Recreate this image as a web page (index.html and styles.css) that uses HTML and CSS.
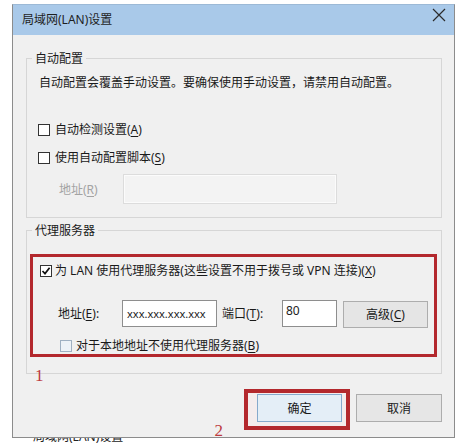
FILE: index.html
```html
<!DOCTYPE html>
<html lang="zh-CN">
<head>
<meta charset="utf-8">
<title>局域网(LAN)设置</title>
<link rel="stylesheet" href="styles.css">
</head>
<body>
<div class="dialog">
  <div class="titlebar">
    <span class="title">局域网(LAN)设置</span>
    <svg class="close" width="14" height="14" viewBox="0 0 14 14"><path d="M1 1L13 13M13 1L1 13" stroke="#2b2b2b" stroke-width="1.2" fill="none"/></svg>
  </div>
  <div class="content">
    <div class="group group-auto">
      <div class="legend">自动配置</div>
      <div class="desc">自动配置会覆盖手动设置。要确保使用手动设置，请禁用自动配置。</div>
      <div class="check-row row-a"><span class="box"></span><span>自动检测设置(<u>A</u>)</span></div>
      <div class="check-row row-s"><span class="box"></span><span>使用自动配置脚本(<u>S</u>)</span></div>
      <div class="script-row"><span class="label-r">地址(<u>R</u>)</span><span class="input-disabled"></span></div>
    </div>
    <div class="group group-proxy">
      <div class="legend">代理服务器</div>
      <div class="highlight">
        <div class="check-row row-x"><span class="box checked"><svg width="10" height="10" viewBox="0 0 10 10"><path d="M1.5 5L4 7.6L8.6 1.8" stroke="#111" stroke-width="1.7" fill="none"/></svg></span><span>为 LAN 使用代理服务器(这些设置不用于拨号或 VPN 连接)(<u>X</u>)</span></div>
        <div class="addr-row">
          <span class="label-e">地址(<u>E</u>):</span>
          <span class="input-addr">xxx.xxx.xxx.xxx</span>
          <span class="label-t">端口(<u>T</u>):</span>
          <span class="input-port">80</span>
          <button class="btn btn-adv">高级(<u>C</u>)</button>
        </div>
        <div class="check-row row-b"><span class="box soft"></span><span>对于本地地址不使用代理服务器(<u>B</u>)</span></div>
      </div>
      <span class="mark mark-1">1</span>
    </div>
    <div class="buttons">
      <span class="mark mark-2">2</span>
      <div class="focus-ring"><button class="btn btn-ok">确定</button></div>
      <button class="btn btn-cancel">取消</button>
    </div>
  </div>
</div>
<div class="under"><div class="under-text">局域网(LAN)设置</div></div>
</body>
</html>
```

FILE: styles.css
```css
html, body {
  margin: 0;
  padding: 0;
}
body {
  width: 469px;
  height: 443px;
  overflow: hidden;
  background: #ffffff;
  font-family: "Noto Sans", "Noto Sans CJK SC", sans-serif;
  font-size: 12px;
  color: #1a1a1a;
}
u {
  text-decoration: underline;
  text-underline-offset: 2px;
}
.dialog {
  margin: 4px 0 0 12px;
  width: 441px;
  height: 432px;
  border: 1px solid #8c8c8c;
  border-top-color: #9cb9d6;
  background: #f0f0f0;
  overflow: hidden;
}
.titlebar {
  height: 30px;
  background: #a9c9e9;
  display: flex;
  justify-content: space-between;
  align-items: center;
  padding: 0 8px 0 9px;
}
.title {
  font-size: 12px;
  line-height: 18px;
  color: #1f1f1f;
}
.close {
  align-self: flex-start;
  margin-top: 3px;
}
.content {
  padding: 23px 12px 0 13px;
}
.group {
  border: 1px solid #d6d6d6;
  position: relative;
}
.group-auto {
  height: 158px;
}
.group-proxy {
  margin-top: 12px;
  height: 142px;
}
.legend {
  width: fit-content;
  margin: -9px 0 0 5px;
  padding: 0 3px;
  height: 18px;
  line-height: 18px;
  background: #f0f0f0;
}
.desc {
  margin: 6px 0 0 12px;
  line-height: 18px;
}
.check-row {
  display: flex;
  align-items: center;
  height: 18px;
  line-height: 18px;
}
.row-a {
  margin: 29px 0 0 11px;
}
.row-s {
  margin: 10px 0 0 11px;
}
.box {
  flex: none;
  width: 10px;
  height: 10px;
  border: 1px solid #333333;
  background: #ffffff;
  margin-right: 5px;
  display: flex;
  align-items: center;
  justify-content: center;
}
.box.checked {
  margin-right: 3px;
}
.box.soft {
  border-color: #9fb0c2;
  background: #edf2f7;
  margin-right: 4px;
}
.script-row {
  display: flex;
  align-items: center;
  margin: 7px 0 0 32px;
  height: 30px;
}
.label-r {
  width: 64px;
  color: #a3a3a3;
}
.input-disabled {
  width: 214px;
  height: 30px;
  box-sizing: border-box;
  border: 1px solid #dcdcdc;
  background: #f3f3f3;
  box-shadow: inset 0 0 0 1px #fbfbfb;
}
.highlight {
  margin: 14px 4px 0 3px;
  border: 3px solid #b3282d;
  height: 97px;
}
.row-x {
  margin: 5px 0 0 7px;
}
.addr-row {
  display: flex;
  align-items: flex-start;
  margin: 20px 0 0 25px;
  height: 28px;
  line-height: 28px;
}
.label-e {
  width: 64px;
}
.input-addr {
  width: 95px;
  height: 27px;
  box-sizing: border-box;
  border: 1px solid #8e8e8e;
  background: #ffffff;
  font-size: 11px;
  line-height: 25px;
  padding-left: 4px;
  color: #222;
}
.label-t {
  margin-left: 5px;
  width: 60px;
}
.input-port {
  width: 55px;
  height: 27px;
  box-sizing: border-box;
  border: 1px solid #8e8e8e;
  background: #ffffff;
  line-height: 20px;
  padding-left: 3px;
  color: #222;
}
.btn {
  font-family: "Noto Sans", "Noto Sans CJK SC", sans-serif;
  font-size: 12px;
  color: #1a1a1a;
  box-sizing: border-box;
  padding: 0;
  margin: 0;
  display: block;
}
.btn-adv {
  margin: 1px 0 0 6px;
  width: 85px;
  height: 27px;
  border: 1px solid #adadad;
  background: #e5e5e5;
  line-height: 25px;
}
.row-b {
  margin: 10px 0 0 27px;
  height: 16px;
}
.mark {
  font-family: "Liberation Serif", serif;
  font-size: 17px;
  line-height: 17px;
  color: #bd3a40;
}
.mark-1 {
  position: absolute;
  left: 8px;
  top: 136px;
}
.buttons {
  display: flex;
  justify-content: flex-end;
  align-items: flex-start;
  margin-top: 15px;
}
.mark-2 {
  margin: 33px 21px 0 0;
}
.focus-ring {
  border: 4px solid #b3282d;
  padding: 1px 4px 4px 9px;
  background: #f4eced;
}
.btn-ok {
  width: 85px;
  height: 28px;
  border: 1px solid #86a9cc;
  background: #e4eef7;
}
.btn-cancel {
  margin: 5px 0 0 6px;
  width: 86px;
  height: 28px;
  border: 1px solid #adadad;
  background: #e6e6e6;
}
.under {
  height: 5px;
  overflow: hidden;
  padding-left: 33px;
}
.under-text {
  font-size: 12px;
  line-height: 18px;
  margin-top: -10px;
  color: #222;
}
```
